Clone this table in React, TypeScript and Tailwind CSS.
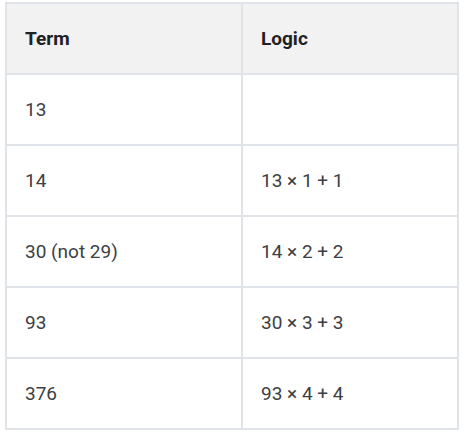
import React from "react";

const rows: [string, string][] = [
  ["13", ""],
  ["14", "13 × 1 + 1"],
  ["30 (not 29)", "14 × 2 + 2"],
  ["93", "30 × 3 + 3"],
  ["376", "93 × 4 + 4"],
];

const App = () => {
  return (
    <div className="w-[466px] h-[436px] bg-white pt-[2px] pl-[5px]">
      <table
        className="table-fixed border-collapse w-[454px] text-[19px] leading-[29px]"
        style={{ fontFamily: "Roboto, sans-serif" }}
      >
        <thead>
          <tr className="bg-[#f2f2f2] text-[#202124]">
            <th className="w-[236px] border-2 border-[#e0e3e8] px-[18px] py-[20px] text-left font-bold">
              Term
            </th>
            <th className="border-2 border-[#e0e3e8] px-[18px] py-[20px] text-left font-bold">
              Logic
            </th>
          </tr>
        </thead>
        <tbody className="text-[#3c4043]">
          {rows.map(([term, logic]) => (
            <tr key={term}>
              <td className="h-[71px] border-2 border-[#e0e3e8] px-[18px] py-[20px]">
                {term}
              </td>
              <td className="h-[71px] border-2 border-[#e0e3e8] px-[18px] py-[20px]">
                {logic}
              </td>
            </tr>
          ))}
        </tbody>
      </table>
    </div>
  );
};

export default App;
